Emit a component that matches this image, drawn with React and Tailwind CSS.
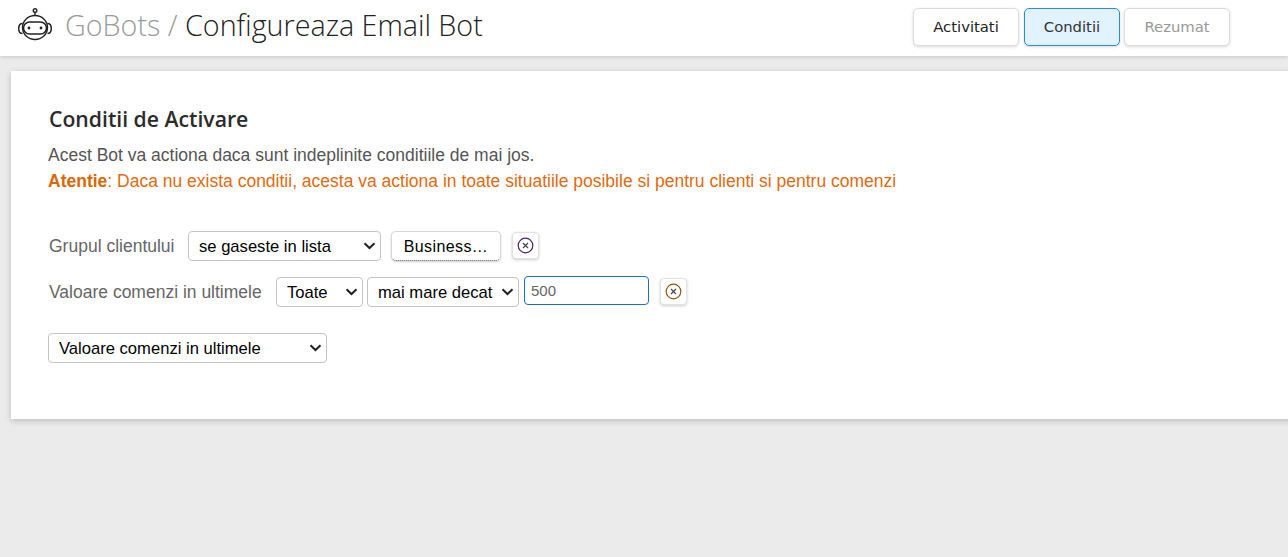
import React from 'react';

const RobotIcon = () => (
  <svg width="36" height="34" viewBox="0 0 36 34" fill="none" stroke="#222" strokeWidth="1.4" className="shrink-0 mb-[6px]">
    <circle cx="18" cy="2.5" r="1.8" />
    <path d="M18 4.3V7.5" />
    <ellipse cx="18" cy="19.5" rx="12.5" ry="12" />
    <rect x="6.5" y="14" width="23" height="12" rx="6" strokeWidth="1.6" />
    <path d="M5.5 15.5C3 15.5 1.7 17 1.7 20.5S3 25.5 5.5 25.5" strokeWidth="1.5" />
    <path d="M30.5 15.5C33 15.5 34.3 17 34.3 20.5S33 25.5 30.5 25.5" strokeWidth="1.5" />
    <circle cx="12" cy="20" r="1.4" fill="#222" stroke="none" />
    <circle cx="24" cy="20" r="1.4" fill="#222" stroke="none" />
  </svg>
);

const RemoveButton = ({ color }) => (
  <button className="w-[27px] h-[27px] flex items-center justify-center bg-white border border-[#e2e2e2] rounded-[4px] shadow-[0_1px_3px_rgba(0,0,0,0.2)]">
    <svg width="17" height="17" viewBox="0 0 17 17" fill="none" stroke={color} strokeWidth="1.2">
      <circle cx="8.5" cy="8.5" r="7.3" />
      <path d="M6 6l5 5M11 6l-5 5" stroke="#444" />
    </svg>
  </button>
);

const Select = ({ width, label }) => (
  <div className={`relative ${width}`}>
    <select className="w-full h-[30px] appearance-none bg-white border border-[#c4c4c4] rounded-[4px] text-[16.6px] text-black pl-[10px] pt-[2px]" defaultValue="a">
      <option value="a">{label}</option>
    </select>
    <svg width="13" height="8" viewBox="0 0 13 8" fill="none" stroke="#222" strokeWidth="2" className="absolute right-[5px] top-[11px] pointer-events-none">
      <path d="M1.5 1.2L6.5 6L11.5 1.2" />
    </svg>
  </div>
);

const App = () => {
  return (
    <div className="h-[557px] overflow-hidden bg-[#ebebeb] font-['Liberation_Sans',sans-serif]">
      <header className="h-[56px] bg-white shadow-[0_1px_4px_rgba(0,0,0,0.15)] flex items-center pl-[17px]">
        <RobotIcon />
        <h1 className="ml-[12px] mb-[6px] w-[848px] text-[28.7px] font-light font-['Open_Sans',sans-serif] text-[#222] whitespace-nowrap">
          <span className="text-[#9b9b9b]">GoBots / </span>Configureaza Email Bot
        </h1>
        <div className="flex mb-[2px] font-['DejaVu_Sans',sans-serif] text-[14.8px]">
          <button className="w-[106px] h-[38px] bg-white border border-[#dcdcdc] rounded-[5px] text-[#222] shadow-[0_1px_3px_rgba(0,0,0,0.15)]">Activitati</button>
          <button className="ml-[5px] w-[96px] h-[38px] bg-[#e0f3fe] border border-[#2a8ee0] rounded-[5px] text-[#333] shadow-[0_1px_3px_rgba(0,0,0,0.15)]">Conditii</button>
          <button className="ml-[4px] w-[106px] h-[38px] bg-white border border-[#dcdcdc] rounded-[5px] text-[#999] shadow-[0_1px_3px_rgba(0,0,0,0.15)]">Rezumat</button>
        </div>
      </header>

      <main className="ml-[11px] mt-[15px] w-[1400px] h-[348px] bg-white shadow-[0_2px_6px_rgba(0,0,0,0.2)] pl-[37px] pt-[34px]">
        <h2 className="ml-[1px] text-[21.2px] font-semibold font-['Open_Sans',sans-serif] text-[#2b2b2b] leading-[28px]">Conditii de Activare</h2>
        <p className="mt-[9px] text-[#555] text-[17.5px] leading-[26px]">Acest Bot va actiona daca sunt indeplinite conditiile de mai jos.</p>
        <p className="text-[#dd6b10] text-[17.5px] leading-[27px]">
          <b className="text-[#d96800]">Atentie</b>: Daca nu exista conditii, acesta va actiona in toate situatiile posibile si pentru clienti si pentru comenzi
        </p>

        <div className="mt-[36px] flex items-center h-[30px] text-[#666] text-[17.5px]">
          <span className="w-[140px] pl-[1px]">Grupul clientului</span>
          <Select width="w-[193px]" label="se gaseste in lista" />
          <button className="ml-[10px] w-[110px] h-[30px] pt-[2px] bg-white border border-[#d8d8d8] border-b-[#555] [border-bottom-style:dotted] rounded-[5px] text-[16px] tracking-[0.4px] text-black shadow-[0_1px_2px_rgba(0,0,0,0.2)]">Business…</button>
          <span className="ml-[11px] mb-[2px]"><RemoveButton color="#4a2070" /></span>
        </div>

        <div className="mt-[16px] flex items-center h-[30px] text-[#666] text-[17.5px]">
          <span className="w-[228px] pl-[1px] whitespace-nowrap">Valoare comenzi in ultimele</span>
          <Select width="w-[87px]" label="Toate" />
          <div className="ml-[4px]">
            <Select width="w-[152px]" label="mai mare decat" />
          </div>
          <input defaultValue="500" className="ml-[5px] mb-[3px] w-[125px] h-[29px] border border-[#1a6fc9] rounded-[4px] px-[6px] text-[15px] text-[#666] outline-none" />
          <span className="ml-[11px] mb-[2px]"><RemoveButton color="#8a5a10" /></span>
        </div>

        <div className="mt-[26px] flex">
          <Select width="w-[279px]" label="Valoare comenzi in ultimele" />
        </div>
      </main>
    </div>
  );
};

export default App;
